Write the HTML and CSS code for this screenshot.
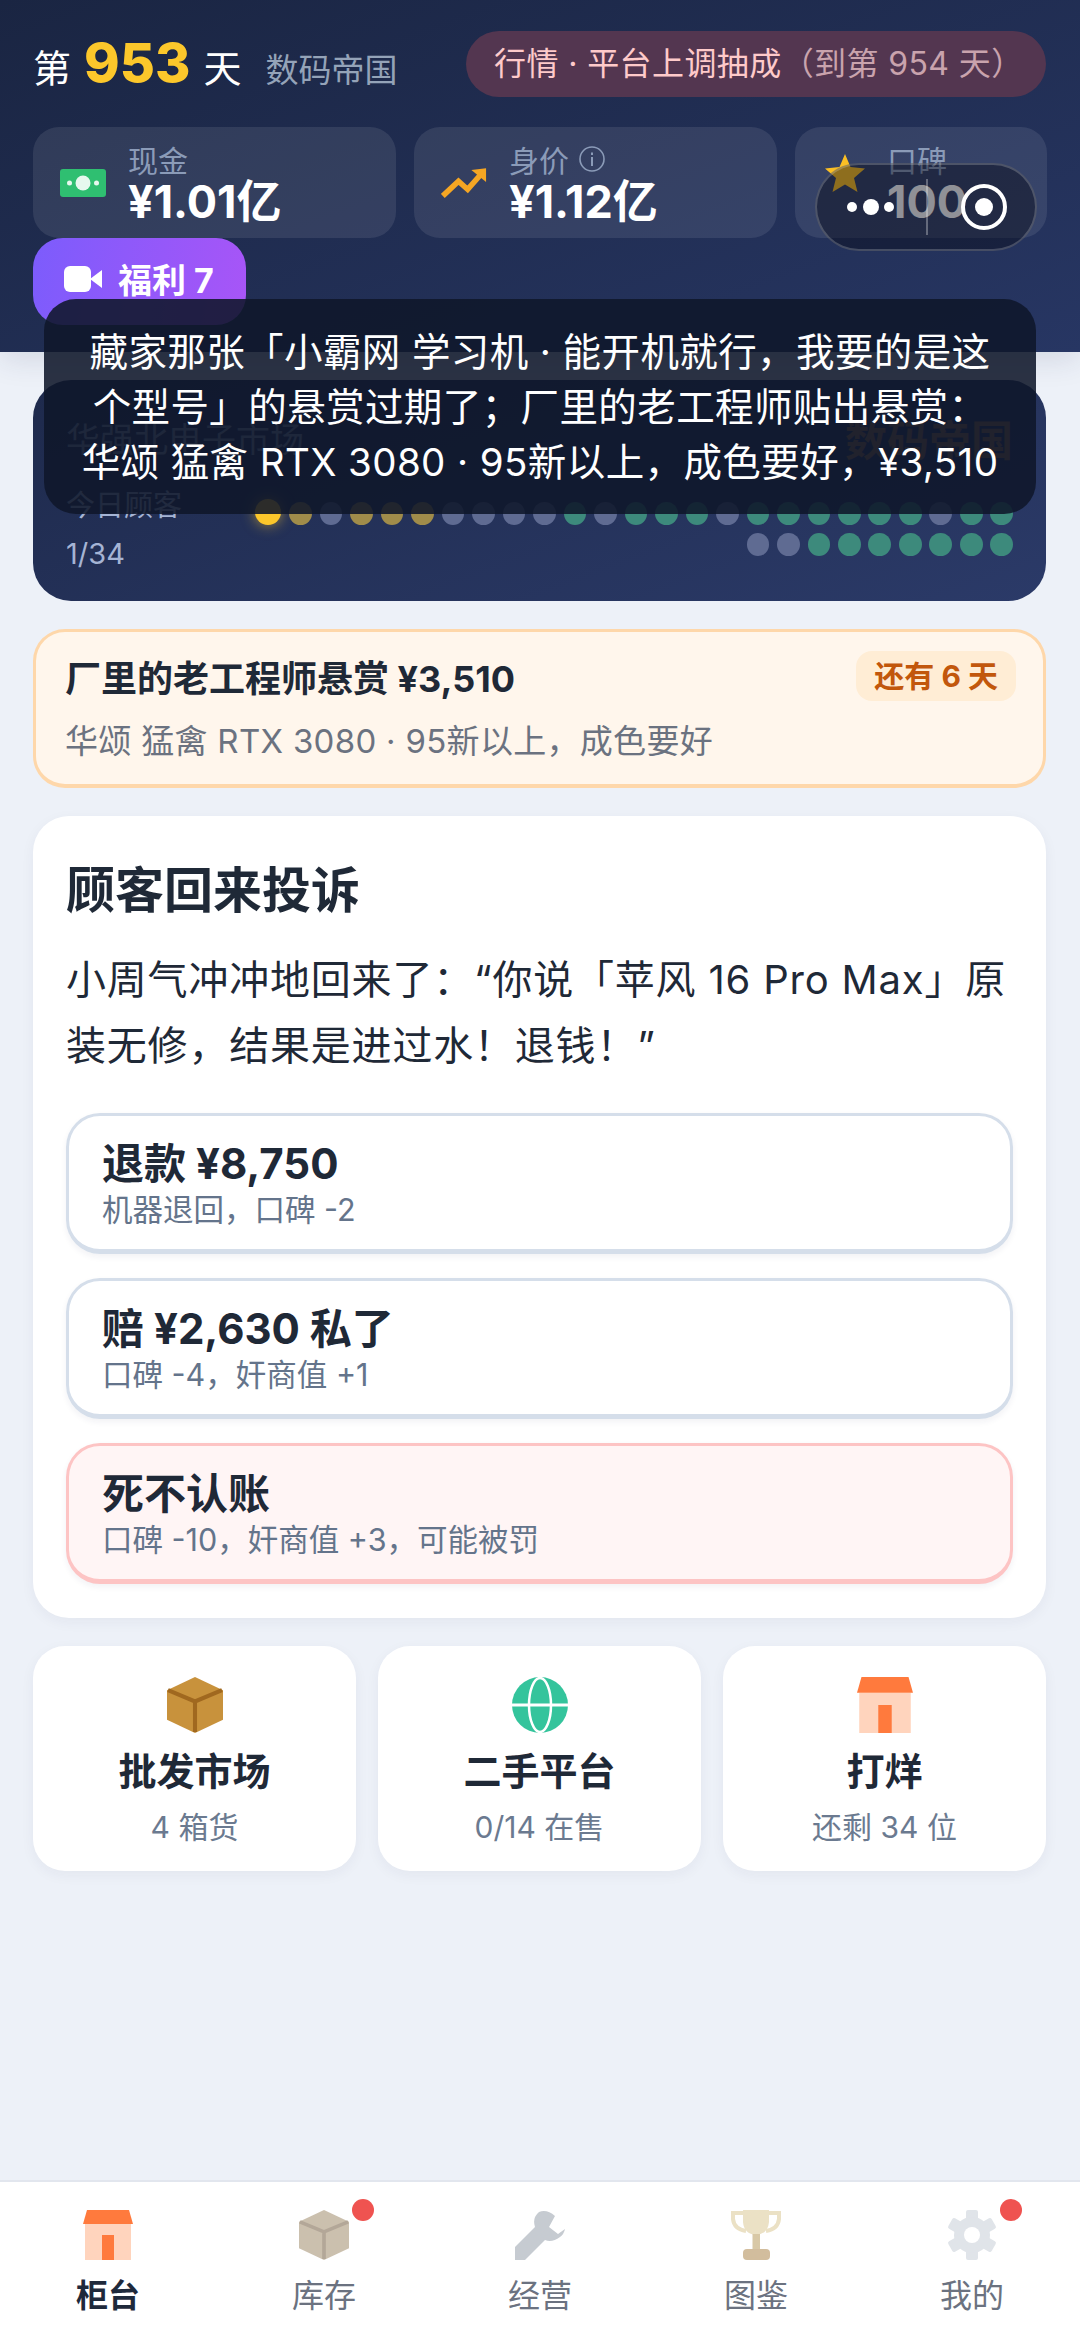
FILE: index.html
```html
<!DOCTYPE html>
<html lang="zh-CN">
<head>
  <meta charset="UTF-8">
  <title>柜台</title>
  <link rel="stylesheet" href="styles.css">
</head>
<body>

  <svg class="defs" width="0" height="0">
    <symbol id="i-box" viewBox="0 0 55 55">
      <polygon points="27.5,0 55,13 55,42 27.5,55 0,42 0,13" fill="#c8923c"/>
      <path d="M1 13 L27.5 24 L54 13 M27.5 24 V54" fill="none" stroke="#a0681f" stroke-width="4"/>
    </symbol>
    <symbol id="i-shop" viewBox="0 0 50 50">
      <rect x="2" y="14" width="46" height="36" fill="#ffd4bd"/>
      <polygon points="4,0 46,0 50,14 0,14" fill="#ff7a3d"/>
      <rect x="19" y="25" width="12" height="25" fill="#ff7a3d"/>
    </symbol>
    <symbol id="i-globe" viewBox="0 0 56 56">
      <circle cx="28" cy="28" r="28" fill="#34c49c"/>
      <ellipse cx="28" cy="28" rx="11" ry="27" fill="none" stroke="#fff" stroke-width="2.5"/>
      <rect x="0" y="26.5" width="56" height="3" fill="#fff"/>
    </symbol>
    <symbol id="i-wrench" viewBox="0 0 50 50">
      <path d="M0 37 V50 H10 L30 30 Q37 33 45 27 Q49 24 50 19 L43 24 L34 17 L40 6 Q32 -1 24 2 Q17 8 20 17 Z" fill="#c6cbd1"/>
    </symbol>
    <symbol id="i-trophy" viewBox="0 0 50 50">
      <path d="M12 3 H2 V9 Q3 19 15 21 M38 3 H48 V9 Q47 19 35 21" fill="none" stroke="#ebe1c5" stroke-width="4"/>
      <path d="M12 0 H38 V12 Q37 24 25 25 Q13 24 12 12 Z" fill="#ebe1c5"/>
      <rect x="21.5" y="24" width="7.5" height="16" fill="#d8c8a6"/>
      <rect x="12" y="39" width="27" height="11" rx="4" fill="#d2bd9d"/>
    </symbol>
    <symbol id="i-gear" viewBox="0 0 50 50">
      <g fill="#e0e4e9">
        <rect x="19" y="0" width="12" height="50" rx="2"/>
        <rect x="19" y="0" width="12" height="50" rx="2" transform="rotate(60 25 25)"/>
        <rect x="19" y="0" width="12" height="50" rx="2" transform="rotate(120 25 25)"/>
        <circle cx="25" cy="25" r="18"/>
      </g>
      <circle cx="25" cy="25" r="8" fill="#fff"/>
    </symbol>
  </svg>

  <header class="top">
    <div class="title-row">
      <div class="day">
        <span class="day-word">第</span>
        <span class="day-num">953</span>
        <span class="day-word">天</span>
        <span class="shop-name">数码帝国</span>
      </div>
      <div class="market">行情 · 平台上调抽成<small>（到第 954 天）</small></div>
    </div>

    <div class="stats">
      <div class="stat">
        <svg class="stat-icon" width="46" height="28" viewBox="0 0 46 28">
          <rect width="46" height="28" rx="3" fill="#2fbf71"/>
          <circle cx="23" cy="14" r="7.5" fill="#e6f8ee"/>
          <circle cx="9.5" cy="14" r="2.5" fill="#e6f8ee"/>
          <circle cx="36.5" cy="14" r="2.5" fill="#e6f8ee"/>
        </svg>
        <div>
          <div class="stat-label">现金</div>
          <div class="stat-value">¥1.01亿</div>
        </div>
      </div>
      <div class="stat">
        <svg class="stat-icon" width="46" height="32" viewBox="0 0 50 32">
          <path d="M2 30 L19 14 L29 23 L43 7" fill="none" stroke="#f5a623" stroke-width="6"/>
          <polygon points="33,2 49,0 49,15" fill="#f5a623"/>
        </svg>
        <div>
          <div class="stat-label">身价
            <svg class="info" width="26" height="26" viewBox="0 0 26 26">
              <circle cx="13" cy="13" r="12" fill="none" stroke="#8b9bb8" stroke-width="1.6"/>
              <rect x="12" y="11" width="2" height="9" fill="#8b9bb8"/>
              <rect x="12" y="6.5" width="2" height="2.5" fill="#8b9bb8"/>
            </svg>
          </div>
          <div class="stat-value">¥1.12亿</div>
        </div>
      </div>
      <div class="stat stat-small">
        <svg class="stat-icon star" width="40" height="38" viewBox="0 0 40 38">
          <polygon points="20,0 25.5,13 40,14.5 29,24 32.5,38 20,30.5 7.5,38 11,24 0,14.5 14.5,13" fill="#fbbf24"/>
        </svg>
        <div>
          <div class="stat-label">口碑</div>
          <div class="stat-value">100</div>
        </div>
      </div>
    </div>

    <button class="welfare">
      <svg width="38" height="26" viewBox="0 0 38 26">
        <rect width="27" height="26" rx="6" fill="#fff"/>
        <polygon points="26,13 38,4 38,22" fill="#fff"/>
      </svg>
      福利 7
    </button>
  </header>

  <main class="content">
    <section class="strip">
      <div class="strip-top">
        <span class="strip-place">华强北电子市场</span>
        <span class="strip-brand">数码帝国</span>
      </div>
      <div class="strip-bottom">
        <div class="strip-count">
          <div>今日顾客</div>
          <div class="strip-num">1/34</div>
        </div>
        <div class="dots">
          <i class="dot now"></i><i class="dot y"></i><i class="dot"></i><i class="dot y"></i><i class="dot y"></i>
          <i class="dot y"></i><i class="dot"></i><i class="dot"></i><i class="dot"></i><i class="dot"></i>
          <i class="dot g"></i><i class="dot"></i><i class="dot g"></i><i class="dot g"></i><i class="dot g"></i>
          <i class="dot"></i><i class="dot g"></i><i class="dot g"></i><i class="dot g"></i><i class="dot g"></i>
          <i class="dot g"></i><i class="dot g"></i><i class="dot"></i><i class="dot g"></i><i class="dot g"></i>
          <i class="dot"></i><i class="dot"></i><i class="dot g"></i><i class="dot g"></i><i class="dot g"></i>
          <i class="dot g"></i><i class="dot g"></i><i class="dot g"></i><i class="dot g"></i>
        </div>
      </div>
    </section>

    <section class="bounty">
      <div class="bounty-head">
        <span class="bounty-title">厂里的老工程师悬赏 ¥3,510</span>
        <span class="bounty-days">还有 6 天</span>
      </div>
      <div class="bounty-sub">华颂 猛禽 RTX 3080 · 95新以上，成色要好</div>
    </section>

    <section class="panel">
      <h2>顾客回来投诉</h2>
      <p>小周气冲冲地回来了：“你说「苹风 16 Pro Max」原装无修，结果是进过水！退钱！”</p>
      <div class="option">
        <div class="option-title">退款 ¥8,750</div>
        <div class="option-sub">机器退回，口碑 -2</div>
      </div>
      <div class="option">
        <div class="option-title">赔 ¥2,630 私了</div>
        <div class="option-sub">口碑 -4，奸商值 +1</div>
      </div>
      <div class="option danger">
        <div class="option-title">死不认账</div>
        <div class="option-sub">口碑 -10，奸商值 +3，可能被罚</div>
      </div>
    </section>

    <section class="actions">
      <div class="action">
        <svg width="56" height="56"><use href="#i-box"/></svg>
        <div class="action-title">批发市场</div>
        <div class="action-sub">4 箱货</div>
      </div>
      <div class="action">
        <svg width="56" height="56"><use href="#i-globe"/></svg>
        <div class="action-title">二手平台</div>
        <div class="action-sub">0/14 在售</div>
      </div>
      <div class="action">
        <svg width="56" height="56"><use href="#i-shop"/></svg>
        <div class="action-title">打烊</div>
        <div class="action-sub">还剩 34 位</div>
      </div>
    </section>
  </main>

  <nav class="tabs">
    <div class="tab active">
      <svg width="50" height="50"><use href="#i-shop"/></svg>
      <span>柜台</span>
    </div>
    <div class="tab">
      <svg class="faded" width="50" height="50"><use href="#i-box"/></svg>
      <span>库存</span>
      <i class="badge"></i>
    </div>
    <div class="tab">
      <svg width="50" height="50"><use href="#i-wrench"/></svg>
      <span>经营</span>
    </div>
    <div class="tab">
      <svg width="50" height="50"><use href="#i-trophy"/></svg>
      <span>图鉴</span>
    </div>
    <div class="tab">
      <svg width="50" height="50"><use href="#i-gear"/></svg>
      <span>我的</span>
      <i class="badge"></i>
    </div>
  </nav>

  <div class="toast">
    藏家那张「小霸网 学习机 · 能开机就行，我要的是这<br>
    个型号」的悬赏过期了；厂里的老工程师贴出悬赏：<br>
    华颂 猛禽 RTX 3080 · 95新以上，成色要好，¥3,510
  </div>

  <div class="capsule">
    <svg width="56" height="20" viewBox="0 0 56 20">
      <circle cx="9" cy="10" r="5" fill="#fff"/>
      <circle cx="28" cy="10" r="8" fill="#fff"/>
      <circle cx="46" cy="10" r="5" fill="#fff"/>
    </svg>
    <i class="capsule-line"></i>
    <svg width="48" height="48" viewBox="0 0 48 48">
      <circle cx="24" cy="24" r="21" fill="none" stroke="#fff" stroke-width="4"/>
      <circle cx="24" cy="24" r="9" fill="#fff"/>
    </svg>
  </div>

</body>
</html>
```

FILE: styles.css
```css
* {
  box-sizing: border-box;
}

html, body {
  margin: 0;
  height: 100%;
}

body {
  width: 1080px;
  height: 2337px;
  position: relative;
  display: flex;
  flex-direction: column;
  overflow: hidden;
  background: #edf1f8;
  color: #1f2937;
  font-family: Inter, "Noto Sans CJK SC", sans-serif;
}

.defs {
  position: absolute;
}

/* top bar */
.top {
  height: 352px;
  padding: 31px 34px 27px 33px;
  background: linear-gradient(160deg, #1a2542, #273663);
  box-shadow: 0 8px 28px rgba(30, 41, 80, 0.12);
}

.title-row {
  display: flex;
  justify-content: space-between;
  align-items: center;
  height: 66px;
  margin-bottom: 30px;
}

.day {
  display: flex;
  align-items: baseline;
  gap: 13px;
  margin-top: -4px;
  color: #fff;
}

.day-word {
  font-size: 38px;
}

.day-num {
  font-size: 54px;
  font-weight: 800;
  color: #fcc72b;
}

.shop-name {
  margin-left: 11px;
  font-size: 33px;
  color: #94a3b8;
}

.market {
  width: 580px;
  height: 66px;
  padding-left: 28px;
  border-radius: 33px;
  background: #533650;
  color: #fecaca;
  font-size: 32px;
  letter-spacing: 0.4px;
  line-height: 66px;
  white-space: nowrap;
}

.market small {
  font-size: 32px;
  color: #c9a3ad;
}

.stats {
  display: flex;
  gap: 18px;
}

.stat {
  flex: 0 0 363px;
  height: 111px;
  display: flex;
  align-items: center;
  gap: 22px;
  padding-left: 27px;
  border-radius: 26px;
  background: rgba(255, 255, 255, 0.09);
}

.stat-small {
  flex-basis: 252px;
  padding-left: 30px;
}

.stat-icon {
  flex: none;
}

.star {
  margin-top: -20px;
}

.stat-label {
  display: flex;
  align-items: center;
  gap: 10px;
  height: 38px;
  font-size: 30px;
  color: #8b9bb8;
}

.stat-value {
  height: 48px;
  font-size: 45px;
  line-height: 48px;
  font-weight: 700;
  color: #fff;
}

.welfare {
  display: flex;
  align-items: flex-start;
  gap: 16px;
  width: 213px;
  height: 87px;
  padding: 28px 0 0 31px;
  border: none;
  border-radius: 30px;
  background: linear-gradient(100deg, #7c5cfc, #a855f7);
  color: #fff;
  font-family: inherit;
  font-size: 34px;
  line-height: 30px;
  font-weight: 700;
}

/* main column */
.content {
  display: flex;
  flex-direction: column;
  gap: 28px;
  padding: 28px 34px 0 33px;
}

.strip {
  height: 221px;
  padding: 34px 33px 0;
  border-radius: 38px;
  background: linear-gradient(160deg, #1e2a4c, #2b3a68);
}

.strip-top {
  display: flex;
  justify-content: space-between;
  align-items: center;
  height: 46px;
}

.strip-place {
  font-size: 34px;
  color: #8a98b4;
}

.strip-brand {
  font-size: 42px;
  font-weight: 700;
  color: #a07040;
}

.strip-bottom {
  display: flex;
  margin-top: 24px;
}

.strip-count {
  flex: 0 0 188px;
  font-size: 29px;
  line-height: 44px;
  color: #a5b4d4;
}

.strip-num {
  margin-top: 4px;
}

.dots {
  flex: 1;
  display: flex;
  flex-wrap: wrap;
  justify-content: flex-end;
  align-items: flex-end;
  align-content: flex-start;
  gap: 8px 7.9px;
  padding-top: 15px;
}

.dot {
  width: 22.6px;
  height: 23px;
  border-radius: 50%;
  background: #5f6b92;
}

.dot.y {
  background: #a08c4a;
}

.dot.g {
  background: #3d8a7c;
}

.dot.now {
  width: 26px;
  height: 26px;
  background: #fcc72b;
  box-shadow: 0 0 14px rgba(252, 199, 43, 0.6);
}

.bounty {
  height: 159px;
  padding: 19px 27px 0 29px;
  border: 3px solid #fed7aa;
  border-bottom-width: 4px;
  border-radius: 32px;
  background: #fff6ec;
}

.bounty-head {
  display: flex;
  justify-content: space-between;
  align-items: center;
  height: 50px;
}

.bounty-title {
  font-size: 36px;
  font-weight: 700;
  color: #1f2937;
}

.bounty-days {
  padding: 0 18px;
  border-radius: 16px;
  background: #ffedd5;
  color: #c2570c;
  font-size: 30px;
  font-weight: 700;
  line-height: 50px;
}

.bounty-sub {
  margin-top: 18px;
  font-size: 33px;
  letter-spacing: 0.3px;
  line-height: 44px;
  color: #6b7280;
}

.panel {
  height: 802px;
  padding: 40px 33px 0;
  border-radius: 36px;
  background: #fff;
  box-shadow: 0 4px 14px rgba(30, 41, 80, 0.05);
}

.panel h2 {
  margin: 0;
  font-size: 49px;
  line-height: 70px;
  font-weight: 700;
}

.panel p {
  margin: 21px 0 34px;
  font-size: 40px;
  letter-spacing: 0.8px;
  line-height: 66px;
  color: #1f2937;
}

.option {
  height: 141px;
  margin-bottom: 24px;
  padding: 22px 33px 0;
  border: 3px solid #d5deea;
  border-bottom-width: 5px;
  border-radius: 34px;
  box-shadow: 0 3px 6px rgba(30, 41, 80, 0.06);
}

.option.danger {
  border-color: #fdc4c4;
  background: #fff5f5;
}

.option-title {
  font-size: 42px;
  line-height: 52px;
  font-weight: 700;
}

.option-sub {
  font-size: 30.5px;
  line-height: 40px;
  color: #64748b;
}

.actions {
  display: grid;
  grid-template-columns: repeat(3, 1fr);
  gap: 22px;
}

.action {
  height: 225px;
  display: flex;
  flex-direction: column;
  align-items: center;
  padding-top: 31px;
  border-radius: 32px;
  background: #fff;
  box-shadow: 0 4px 14px rgba(30, 41, 80, 0.05);
}

.action-title {
  margin-top: 10px;
  font-size: 38px;
  line-height: 56px;
  font-weight: 700;
}

.action-sub {
  margin-top: 8px;
  font-size: 30px;
  line-height: 40px;
  color: #6b7a90;
}

/* bottom tabs */
.tabs {
  margin-top: auto;
  height: 157px;
  display: flex;
  justify-content: space-around;
  padding: 28px 0 0;
  border-top: 2px solid #e2e6ee;
  background: #fff;
}

.tab {
  position: relative;
  width: 216px;
  display: flex;
  flex-direction: column;
  align-items: center;
  font-size: 32px;
  color: #6b7280;
}

.tab span {
  margin-top: 13px;
  line-height: 46px;
}

.tab.active {
  color: #1e293b;
  font-weight: 700;
}

.faded {
  filter: grayscale(0.65) opacity(0.6);
}

.badge {
  position: absolute;
  top: -11px;
  left: 136px;
  width: 22px;
  height: 22px;
  border-radius: 50%;
  background: #ef5350;
}

/* floating layers */
.toast {
  position: absolute;
  top: 299px;
  left: 44px;
  width: 992px;
  height: 215px;
  padding: 26px 20px;
  border-radius: 32px;
  background: rgba(15, 23, 42, 0.88);
  color: #fff;
  font-size: 38.5px;
  letter-spacing: 0.4px;
  line-height: 55px;
  text-align: center;
}

.capsule {
  position: absolute;
  top: 163px;
  left: 815px;
  width: 222px;
  height: 88px;
  display: flex;
  align-items: center;
  padding-left: 26px;
  border: 2px solid rgba(255, 255, 255, 0.2);
  border-radius: 44px;
  background: rgba(8, 10, 25, 0.45);
}

.capsule-line {
  width: 2px;
  height: 56px;
  margin: 0 32px 0 27px;
  background: rgba(255, 255, 255, 0.3);
}
```
